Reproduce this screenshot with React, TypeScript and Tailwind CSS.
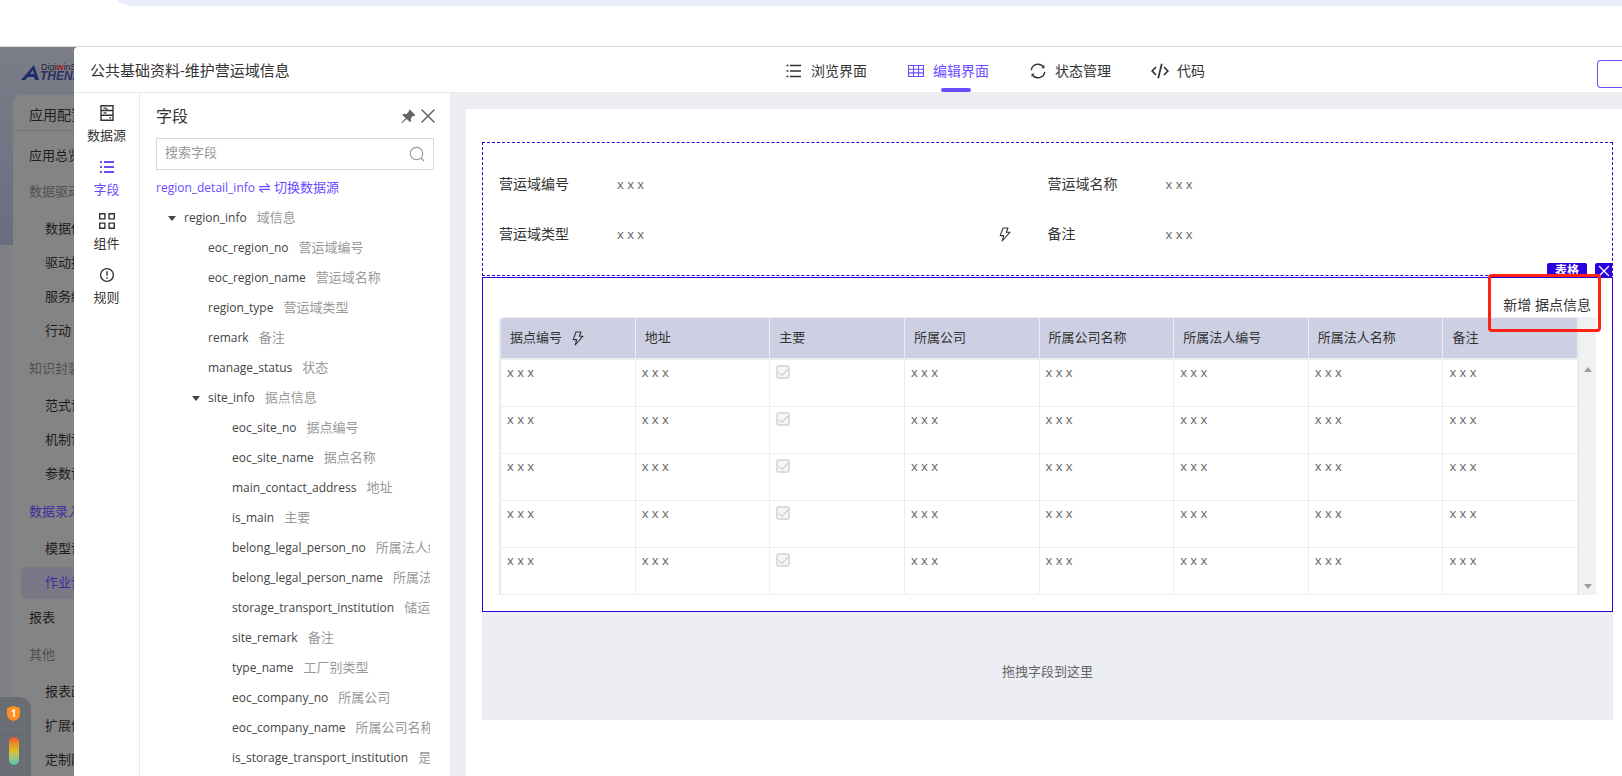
import type { ReactNode } from "react";
import { X } from "lucide-react";

type MenuItem = { label: string; kind: "single" | "group" | "sub"; active?: boolean };

const menu: MenuItem[] = [
  { label: "数据驱动", kind: "group" },
  { label: "数据侦测", kind: "sub" },
  { label: "驱动执行", kind: "sub" },
  { label: "服务编排", kind: "sub" },
  { label: "行动", kind: "sub" },
  { label: "知识封装", kind: "group" },
  { label: "范式设计", kind: "sub" },
  { label: "机制设计", kind: "sub" },
  { label: "参数设计", kind: "sub" },
  { label: "数据录入", kind: "group", active: true },
  { label: "模型设计", kind: "sub" },
  { label: "作业设计", kind: "sub", active: true },
  { label: "报表", kind: "single" },
  { label: "其他", kind: "group" },
  { label: "报表画布", kind: "sub" },
  { label: "扩展信息", kind: "sub" },
  { label: "定制配置", kind: "sub" },
];

type Field = { name: string; label: string; level: 0 | 1 | 2; open?: boolean };

const fields: Field[] = [
  { name: "region_info", label: "域信息", level: 0, open: true },
  { name: "eoc_region_no", label: "营运域编号", level: 1 },
  { name: "eoc_region_name", label: "营运域名称", level: 1 },
  { name: "region_type", label: "营运域类型", level: 1 },
  { name: "remark", label: "备注", level: 1 },
  { name: "manage_status", label: "状态", level: 1 },
  { name: "site_info", label: "据点信息", level: 1, open: true },
  { name: "eoc_site_no", label: "据点编号", level: 2 },
  { name: "eoc_site_name", label: "据点名称", level: 2 },
  { name: "main_contact_address", label: "地址", level: 2 },
  { name: "is_main", label: "主要", level: 2 },
  { name: "belong_legal_person_no", label: "所属法人编号", level: 2 },
  { name: "belong_legal_person_name", label: "所属法人名称", level: 2 },
  { name: "storage_transport_institution", label: "储运机构", level: 2 },
  { name: "site_remark", label: "备注", level: 2 },
  { name: "type_name", label: "工厂别类型", level: 2 },
  { name: "eoc_company_no", label: "所属公司", level: 2 },
  { name: "eoc_company_name", label: "所属公司名称", level: 2 },
  { name: "is_storage_transport_institution", label: "是否储运机构", level: 2 },
];

const indent = ["pl-3", "pl-9", "pl-[60px]"];

const columns = ["据点编号", "地址", "主要", "所属公司", "所属公司名称", "所属法人编号", "所属法人名称", "备注"];

function ListIcon() {
  return (
    <svg className="size-4" viewBox="0 0 16 16" fill="currentColor">
      <path d="M1 2h2v2H1zM5 2h10v2H5zM1 7h2v2H1zM5 7h10v2H5zM1 12h2v2H1zM5 12h10v2H5z" />
    </svg>
  );
}

function ThinListIcon() {
  return (
    <svg className="size-[18px]" viewBox="0 0 18 18" stroke="currentColor" strokeWidth="1.3" fill="none">
      <path d="M1.5 3.5h2M5 3.5h11M1.5 9h2M5 9h11M1.5 14.5h2M5 14.5h11" />
    </svg>
  );
}

function GridIcon() {
  return (
    <svg className="size-[18px]" viewBox="0 0 18 18" stroke="currentColor" strokeWidth="1.1" fill="none">
      <path d="M1.5 3.5h15v11h-15zM1.5 7.2h15M1.5 10.9h15M6.5 3.5v11M11.5 3.5v11" />
    </svg>
  );
}

function SyncIcon() {
  return (
    <svg className="size-[18px]" viewBox="0 0 18 18" stroke="currentColor" strokeWidth="1.4" fill="none">
      <path d="M2.3 8.2A6.8 6.8 0 0 1 14.8 5.4M15.7 9.8A6.8 6.8 0 0 1 3.2 12.6" />
      <path d="M15.4 3v3.2h-3zM2.6 15v-3.2h3z" fill="currentColor" stroke="none" />
    </svg>
  );
}

function CodeIcon() {
  return (
    <svg className="size-[18px]" viewBox="0 0 18 18" stroke="currentColor" strokeWidth="1.7" fill="none">
      <path d="M5 5 1.2 9 5 13M13 5l3.8 4-3.8 4M10.8 1.8 7.2 16.2" />
    </svg>
  );
}

function DatabaseIcon() {
  return (
    <svg className="size-4" viewBox="0 0 16 16" stroke="currentColor" strokeWidth="1.4" fill="none">
      <path d="M2 .7h12v14.6H2zM2 5.5h12M2 10.3h12M4.5 3.1h3M4.5 7.9h3M10.5 12.8h1.5M8 5.5v-2" />
    </svg>
  );
}

function BlocksIcon() {
  return (
    <svg className="size-4" viewBox="0 0 16 16" stroke="currentColor" strokeWidth="1.4" fill="none">
      <path d="M.7.7h5.2v5.2H.7zM10.1.7h5.2v5.2h-5.2zM.7 10.1h5.2v5.2H.7zM10.1 10.1h5.2v5.2h-5.2z" />
    </svg>
  );
}

function RuleIcon() {
  return (
    <svg className="size-4" viewBox="0 0 16 16" stroke="currentColor" strokeWidth="1.4" fill="none">
      <circle cx="8" cy="8" r="6.4" />
      <path d="M8 4.2v4.6M8 10.2v1.6" />
    </svg>
  );
}

function PinIcon() {
  return (
    <svg className="size-[15px]" viewBox="0 0 15 15" fill="currentColor">
      <path d="M8.8.6 14.4 6.2 13 7.1l-1-.2-2 2.2.2 2.8-1.1 1.2-3.4-3.2L1 14.2l-.6-.5L4.6 9 1.4 5.9l1.2-1.1 2.9.1 2.3-2.2-.1-1z" />
    </svg>
  );
}

function SearchIcon() {
  return (
    <svg className="size-4" viewBox="0 0 16 16" stroke="currentColor" strokeWidth="1.2" fill="none">
      <circle cx="7.5" cy="7.5" r="6.2" />
      <path d="m12 12 3 3" />
    </svg>
  );
}

function BoltIcon() {
  return (
    <svg className="h-[15px] w-3" viewBox="0 0 12 15" stroke="currentColor" strokeWidth="1.1" strokeLinejoin="round" fill="none">
      <path d="M4 1h5L7.3 5.2H11L3.2 14l1.5-5.4H1.2z" />
    </svg>
  );
}

function SwapIcon() {
  return (
    <svg className="h-3 w-[11px]" viewBox="0 0 11 12" stroke="currentColor" strokeWidth="1.2" fill="none">
      <path d="M0 4.600h10.500L7 1.400M11 7.400H.5L4 10.600" />
    </svg>
  );
}

function Logo() {
  return (
    <svg className="h-[22px] w-20 shrink-0" viewBox="0 0 80 22">
      <path d="M0 18 13 3l5 15h-4l-1-3H7l-3 3zM9 12h4l-1-4z" fill="#1d2c6b" fillRule="evenodd" />
      <text x="20" y="8" fontSize="9" fontFamily="Liberation Sans, sans-serif" fill="#26262e">Digi<tspan fill="#a01622" fontWeight="700">w</tspan>inSoft</text>
      <text x="19" y="18" fontSize="12" fontWeight="700" fontStyle="italic" fontFamily="Liberation Sans, sans-serif" fill="#2c2f63">THENA</text>
    </svg>
  );
}

function Caret() {
  return (
    <svg className="h-[5px] w-2" viewBox="0 0 8 5" fill="currentColor">
      <path d="M0 0h8L4 5z" />
    </svg>
  );
}

function Sidebar() {
  return (
    <aside className="flex w-[74px] shrink-0 flex-col overflow-hidden bg-[linear-gradient(#7b7e87,#686d82_198px,#7f8187_198px)] pl-[13px] whitespace-nowrap">
      <div className="flex h-12 items-center pt-1 pl-2">
        <Logo />
      </div>
      <nav className="w-60 grow rounded-tl-lg bg-[#848484] text-[13px] text-[#1d1d1f]">
        <div className="flex h-9 items-center border-b border-[#747474] pt-1 pl-4 text-sm">应用配置</div>
        <ul className="pt-2">
          <li className="flex h-8 items-center pt-[2px] pl-4">应用总览</li>
          {menu.map((item) => (
            <li
              key={item.label}
              className={
                item.kind === "group"
                  ? item.active
                    ? "flex h-[41px] items-center pl-4 text-[#3f2c9c]"
                    : "flex h-[41px] items-center pl-4 text-[#505052]"
                  : item.kind === "single"
                    ? "flex h-[34px] items-center pt-[2px] pl-4"
                    : "flex h-[34px] items-center pl-2"
              }
            >
              {item.kind === "sub" ? (
                <a
                  href="#"
                  className={
                    item.active
                      ? "flex h-8 grow items-center rounded-md bg-[#787886] pl-6 text-[#3f2c9c]"
                      : "flex h-8 grow items-center pl-6"
                  }
                >
                  {item.label}
                </a>
              ) : (
                item.label
              )}
            </li>
          ))}
        </ul>
      </nav>
    </aside>
  );
}

function Tab({ icon, label, active }: { icon: ReactNode; label: string; active?: boolean }) {
  return (
    <button
      type="button"
      className={
        active
          ? "relative flex items-center gap-2 pt-[2px] text-[#6a4cff]"
          : "relative flex items-center gap-2 pt-[2px] text-[#333]"
      }
    >
      {icon}
      {label}
      {active && <span className="absolute bottom-0 left-1/2 -ml-[7px] h-1 w-[30px] rounded-xs bg-[#6a4cff]" />}
    </button>
  );
}

function RailItem({ icon, label, active }: { icon: ReactNode; label: string; active?: boolean }) {
  return (
    <button
      type="button"
      className={
        active
          ? "flex h-[54px] flex-col items-center gap-1 text-[#6a4cff]"
          : "flex h-[54px] flex-col items-center gap-1 text-[#333]"
      }
    >
      {icon}
      <span className="text-[13px] leading-5">{label}</span>
    </button>
  );
}

function FieldPanel() {
  return (
    <section className="w-[310px] shrink-0 px-4 pt-2">
      <div className="flex h-[30px] items-center text-[#666]">
        <h2 className="mr-auto text-base text-[#333]">字段</h2>
        <button type="button" aria-label="固定">
          <PinIcon />
        </button>
        <button type="button" aria-label="关闭" className="-mr-[6px]">
          <X className="size-6" strokeWidth={1.5} />
        </button>
      </div>
      <label className="mt-[7px] flex h-8 items-center border border-[#d9d9d9] px-2 text-[#999]">
        <input
          type="text"
          aria-label="搜索字段"
          placeholder="搜索字段"
          className="min-w-0 grow pb-[3px] text-[13px] outline-none placeholder:text-[#999]"
        />
        <SearchIcon />
      </label>
      <a href="#" className="flex h-[33px] items-center gap-1 pt-[2px] text-[13px] text-[#6a4cff]">
        <span className="text-xs">region_detail_info</span>
        <SwapIcon />
        切换数据源
      </a>
      <ul className="mr-1 overflow-hidden text-xs whitespace-nowrap">
        {fields.map((field) => (
          <li key={field.name} className={indent[field.level]}>
            <div className="flex h-[30px] items-center text-[#444]">
              <span className="w-4 shrink-0">{field.open && <Caret />}</span>
              {field.name}
              <span className="ml-[10px] text-[13px] text-[#999]">{field.label}</span>
            </div>
          </li>
        ))}
      </ul>
    </section>
  );
}

function FormItem({ label, icon }: { label: string; icon?: ReactNode }) {
  return (
    <div className="flex h-[50px] items-center text-sm text-[#333]">
      <span className="w-[118px]">{label}</span>
      <span className="text-[13px] text-[#666]">x x x</span>
      {icon && <span className="mr-[37px] ml-auto">{icon}</span>}
    </div>
  );
}

function SiteTable() {
  return (
    <div className="flex">
      <table className="w-0 grow table-fixed border-separate border-spacing-0 rounded-tl border-l-2 border-[#eaeaea] text-left text-[13px]">
        <thead>
          <tr>
            {columns.map((col, i) => (
              <th
                key={col}
                scope="col"
                className="h-[43px] border-t border-r border-b-2 border-[#eee] bg-[#cdcfe3] px-[9px] font-normal text-[#333] first:rounded-tl"
              >
                <span className="flex items-center gap-[10px]">
                  {col}
                  {i === 0 && <BoltIcon />}
                </span>
              </th>
            ))}
          </tr>
        </thead>
        <tbody>
          {[0, 1, 2, 3, 4].map((row) => (
            <tr key={row}>
              {columns.map((col) => (
                <td key={col} className="h-[47px] border-r border-b border-[#eee] px-[6px] pt-[3px] align-top leading-[18px] text-[#666]">
                  {col === "主要" ? (
                    <span className="relative mt-[2px] flex size-[14px]">
                      <input
                        type="checkbox"
                        aria-label={col}
                        checked
                        disabled
                        className="size-[14px] appearance-none rounded-[3px] border-2 border-[#dcdcdc] bg-[#f5f5f5]"
                      />
                      <svg className="absolute inset-0 size-[14px]" viewBox="0 0 14 14" fill="none" stroke="#b8b8b8">
                        <path d="m3 7.5 3 3L12 4" />
                      </svg>
                    </span>
                  ) : (
                    "x x x"
                  )}
                </td>
              ))}
            </tr>
          ))}
        </tbody>
      </table>
      <div className="flex w-[18px] shrink-0 flex-col items-center justify-between border-l border-[#e6e6e6] bg-[#f1f1f1] pt-[50px] pb-[6px] text-[#a0a0a0]">
        <span className="rotate-180">
          <Caret />
        </span>
        <Caret />
      </div>
    </div>
  );
}

function Canvas() {
  return (
    <main className="min-w-0 grow bg-[#edeef3] pt-4 pl-4">
      <div className="h-full bg-white pt-[33px] pr-[9px] pl-4">
        <section className="grid grid-cols-2 border border-dashed border-[#2b00dd] p-4">
          <FormItem label="营运域编号" />
          <FormItem label="营运域名称" />
          <FormItem label="营运域类型" icon={<BoltIcon />} />
          <FormItem label="备注" />
        </section>
        <section className="relative mt-px border border-[#2b00dd] px-4 pb-4">
          <div className="absolute right-0 bottom-full flex h-[15px] gap-2 overflow-hidden text-white">
            <span className="rounded-t-xs bg-[#2b00dd] px-2 text-xs leading-4 font-bold">表格</span>
            <button type="button" aria-label="删除" className="flex w-[17px] items-center justify-center rounded-tl-xs bg-[#2b00dd]">
              <X className="size-[18px] shrink-0" strokeWidth={1.7} />
            </button>
          </div>
          <div className="flex h-[39px] items-end justify-end pr-[5px]">
            <button type="button" className="pb-[5px] text-sm leading-[14px] text-[#333]">
              新增 据点信息
            </button>
          </div>
          <SiteTable />
          <div className="absolute -top-1 right-[11px] h-[58px] w-[113px] rounded-sm border-[3px] border-[#ff2114]" />
        </section>
        <div className="flex h-[108px] items-center justify-center bg-[#edeef3] pt-3 text-[13px] text-[#666]">
          拖拽字段到这里
        </div>
      </div>
    </main>
  );
}

export default function App() {
  return (
    <div className="flex min-h-screen flex-col overflow-hidden bg-white font-['Open_Sans','Noto_Sans_CJK_SC',sans-serif]">
      <div className="h-[47px] shrink-0 border-b border-[#dedede]">
        <div className="ml-[118px] h-[6px] rounded-bl-[18px_6px] bg-[#eaedf8]" />
      </div>
      <div className="flex grow bg-[#7b7e87]">
        <Sidebar />
        <div className="flex min-w-0 grow flex-col rounded-tl bg-white">
          <header className="flex h-[46px] shrink-0 border-b border-[#eaeaea] pl-4">
            <h1 className="flex w-[695px] shrink-0 items-center pt-[2px] text-[15px] text-[#333]">
              公共基础资料-维护营运域信息
            </h1>
            <div className="flex gap-10 text-sm">
              <Tab icon={<ThinListIcon />} label="浏览界面" />
              <Tab icon={<GridIcon />} label="编辑界面" active />
              <Tab icon={<SyncIcon />} label="状态管理" />
              <Tab icon={<CodeIcon />} label="代码" />
            </div>
            <button
              type="button"
              aria-label="发布"
              className="mt-[13px] ml-auto h-7 w-[25px] rounded-l border border-r-0 border-[#6a4cff]"
            />
          </header>
          <div className="flex grow">
            <div className="flex w-[66px] shrink-0 flex-col border-r border-[#eaeaea] pt-3">
              <RailItem icon={<DatabaseIcon />} label="数据源" />
              <RailItem icon={<ListIcon />} label="字段" active />
              <RailItem icon={<BlocksIcon />} label="组件" />
              <RailItem icon={<RuleIcon />} label="规则" />
            </div>
            <FieldPanel />
            <Canvas />
          </div>
        </div>
      </div>
      <div className="fixed bottom-0 left-0 flex h-[79px] w-[31px] flex-col items-center rounded-tr-xl bg-[#6b6d75] pt-[9px] pr-1">
        <svg className="h-[15px] w-[13px]" viewBox="0 0 13 15">
          <path d="M6.5 0 13 2v6c0 4-3 6-6.500 7C3 14 0 12 0 8V2z" fill="#ff8f1c" />
          <text x="6.5" y="11" fontSize="10" fontWeight="700" textAnchor="middle" fill="#fff">1</text>
        </svg>
        <div className="mt-2 h-px w-[27px] bg-[#73757e]" />
        <div className="mt-[7px] h-7 w-[10px] rounded-full bg-linear-to-b from-[#f0552d] via-[#d8bf1e] to-[#35c6b4]" />
      </div>
    </div>
  );
}
